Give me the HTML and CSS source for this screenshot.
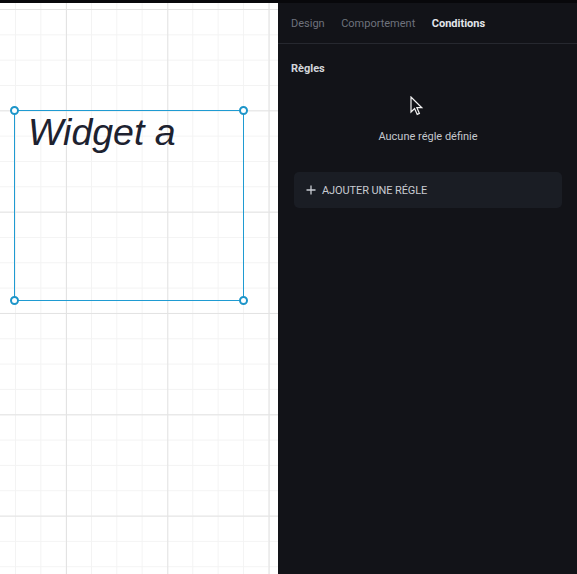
FILE: index.html
```html
<!DOCTYPE html>
<html lang="fr">
<head>
<meta charset="utf-8">
<title>Éditeur</title>
<link rel="stylesheet" href="styles.css">
</head>
<body>
<div class="topbar"></div>
<div class="app">
  <div class="canvas">
    <div class="widget">
      <span class="widget-text">Widget a</span>
      <span class="handle tl"></span>
      <span class="handle tr"></span>
      <span class="handle bl"></span>
      <span class="handle br"></span>
    </div>
  </div>
  <aside class="panel">
    <nav class="tabs">
      <span class="tab">Design</span>
      <span class="tab">Comportement</span>
      <span class="tab active">Conditions</span>
    </nav>
    <section class="section">
      <h3 class="section-title">Règles</h3>
      <p class="empty">Aucune régle définie</p>
      <button class="add-btn" type="button">
        <svg class="plus" width="10" height="10" viewBox="0 0 10 10"><path d="M5 0.5v9M0.5 5h9" stroke="currentColor" stroke-width="1.3" fill="none"/></svg>
        <span>AJOUTER UNE RÉGLE</span>
      </button>
    </section>
    <svg class="cursor" width="14" height="20" viewBox="0 0 14 20"><path d="M1 1 L1 16 L4.6 12.6 L7.2 18.4 L9.4 17.4 L6.9 11.7 L11.8 11.7 Z" fill="#111217" stroke="#f2f2f2" stroke-width="1.2" stroke-linejoin="miter"/></svg>
  </aside>
</div>
</body>
</html>
```

FILE: styles.css
```css
* { box-sizing: border-box; }
html, body {
  margin: 0;
  padding: 0;
  width: 577px;
  height: 574px;
  overflow: hidden;
  background: #121318;
}
.topbar {
  height: 3px;
  background: #08080b;
}
.app {
  display: flex;
  height: 571px;
}
.canvas {
  position: relative;
  flex: 0 0 278px;
  background-color: #ffffff;
  background-image:
    linear-gradient(to right, #e3e3e3 1px, transparent 1px),
    linear-gradient(to bottom, #e3e3e3 1px, transparent 1px),
    linear-gradient(to right, #f3f3f3 1px, transparent 1px),
    linear-gradient(to bottom, #f3f3f3 1px, transparent 1px);
  background-size: 101.33px 101.33px, 101.33px 101.33px, 25.33px 25.33px, 25.33px 25.33px;
  background-position: 66px 0, 0 6px, 15px 0, 0 6px;
}
.widget {
  position: absolute;
  left: 14px;
  top: 107px;
  width: 230px;
  height: 191px;
  border: 1px solid #1f9bd2;
  padding-left: 13px;
}
.widget-text {
  font-family: "Liberation Sans", Arial, sans-serif;
  font-style: italic;
  font-size: 37.5px;
  color: #1d2230;
  line-height: 43px;
}
.handle {
  position: absolute;
  width: 9px;
  height: 9px;
  border: 2px solid #1d95c9;
  border-radius: 50%;
  background: #ffffff;
}
.handle.tl { left: -5px; top: -5px; }
.handle.tr { right: -5px; top: -5px; }
.handle.bl { left: -5px; bottom: -5px; }
.handle.br { right: -5px; bottom: -5px; }

.panel {
  position: relative;
  flex: 1;
  background: #121318;
  font-family: Roboto, "Noto Sans", sans-serif;
  font-size: 11px;
}
.tabs {
  display: flex;
  align-items: center;
  gap: 16.5px;
  height: 41px;
  padding: 1px 13px 0;
  border-bottom: 1px solid #26282f;
}
.tab {
  color: #6e727c;
}
.tab.active {
  color: #e3e5ea;
  font-weight: 700;
}
.section {
  padding: 18px 15px 0 16px;
}
.section-title {
  margin: 0 0 0 -3px;
  font-size: 11px;
  font-weight: 700;
  color: #d3d5da;
  line-height: 13px;
}
.empty {
  margin: 55px 0 0;
  text-align: center;
  color: #c4c7cd;
  line-height: 13px;
}
.add-btn {
  margin-top: 29px;
  width: 100%;
  height: 36px;
  display: flex;
  align-items: center;
  gap: 6px;
  padding: 0 12px;
  border: none;
  border-radius: 5px;
  background: #1a1d24;
  color: #c8cbd2;
  font-family: Roboto, "Noto Sans", sans-serif;
  font-size: 11px;
  letter-spacing: -0.1px;
  cursor: pointer;
}
.plus { flex: none; }
.cursor {
  position: absolute;
  left: 132px;
  top: 93px;
}
```
